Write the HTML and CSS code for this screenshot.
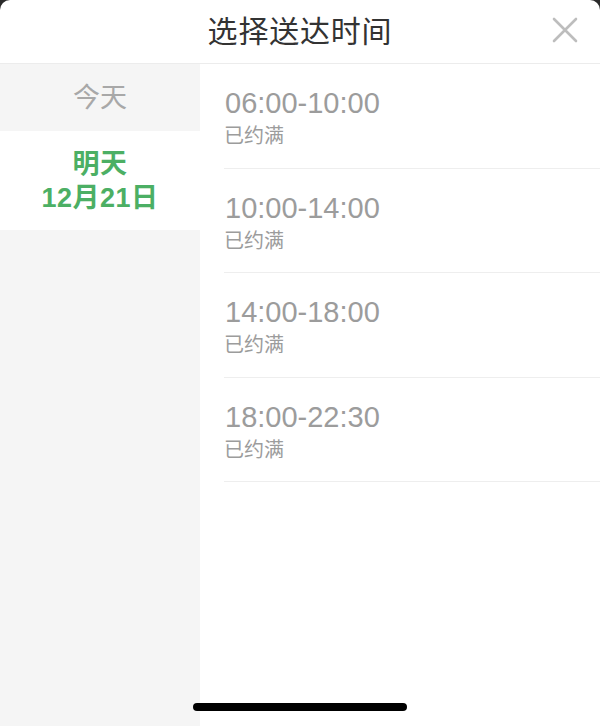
FILE: index.html
```html
<!DOCTYPE html>
<html lang="zh-CN">
<head>
<meta charset="utf-8">
<title>选择送达时间</title>
<link rel="stylesheet" href="styles.css">
</head>
<body>
<div class="sheet">
  <header class="header">
    <h1 class="title">选择送达时间</h1>
    <button class="close" aria-label="关闭">
      <svg width="26" height="26" viewBox="0 0 26 26"><path d="M2 2L24 24M24 2L2 24" stroke="#bdbdbd" stroke-width="2.6" stroke-linecap="round"/></svg>
    </button>
  </header>
  <div class="body">
    <nav class="days">
      <div class="day">今天</div>
      <div class="day day-active">明天<br>12月21日</div>
    </nav>
    <ul class="slots">
      <li class="slot"><div class="time">06:00-10:00</div><div class="status">已约满</div></li>
      <li class="slot"><div class="time">10:00-14:00</div><div class="status">已约满</div></li>
      <li class="slot"><div class="time">14:00-18:00</div><div class="status">已约满</div></li>
      <li class="slot"><div class="time">18:00-22:30</div><div class="status">已约满</div></li>
    </ul>
  </div>
  <div class="home-indicator"></div>
</div>
</body>
</html>
```
FILE: styles.css
```css
* { box-sizing: border-box; }
html, body { margin: 0; padding: 0; height: 100%; }
body {
  background: #2a2a2a;
  font-family: "Liberation Sans", "Noto Sans CJK SC", sans-serif;
}
.sheet {
  position: relative;
  height: 726px;
  background: #fff;
  border-radius: 10px 10px 0 0;
  overflow: hidden;
  display: flex;
  flex-direction: column;
}
.header {
  height: 64px;
  flex: none;
  display: flex;
  align-items: center;
  justify-content: center;
  border-bottom: 1px solid #ececec;
  position: relative;
}
.title {
  margin: 0;
  font-family: "Noto Sans CJK SC", sans-serif;
  font-weight: 400;
  font-size: 30px;
  color: #333;
  letter-spacing: 0.8px;
  line-height: 1;
  margin-top: -6px;
}
.close {
  position: absolute;
  right: 22px;
  top: 17px;
  width: 26px;
  height: 26px;
  padding: 0;
  border: 0;
  background: none;
}
.close svg { display: block; }
.body {
  flex: 1;
  display: flex;
}
.days {
  width: 200px;
  flex: none;
  background: #f5f5f5;
}
.day {
  height: 67px;
  padding-bottom: 4px;
  display: flex;
  align-items: center;
  justify-content: center;
  font-family: "Noto Sans CJK SC", sans-serif;
  font-size: 27px;
  color: #a8a8a8;
}
.day-active {
  height: 99px;
  padding-bottom: 0;
  background: #fff;
  color: #4caf64;
  font-weight: 700;
  font-family: "Liberation Sans", "Noto Sans CJK SC", sans-serif;
  font-size: 27px;
  line-height: 34px;
  letter-spacing: 0.5px;
  text-align: center;
}
.slots {
  flex: 1;
  margin: 0;
  padding: 0 0 0 24px;
  list-style: none;
}
.slot {
  height: 104.5px;
  padding-top: 21px;
  border-bottom: 1px solid #eeeeee;
}
.time {
  font-size: 29px;
  line-height: 36px;
  color: #9c9c9c;
  padding-left: 1px;
}
.status {
  font-family: "Noto Sans CJK SC", sans-serif;
  font-size: 20px;
  line-height: 28px;
  color: #9c9c9c;
}
.home-indicator {
  position: absolute;
  left: 193px;
  bottom: 15px;
  width: 214px;
  height: 8px;
  border-radius: 4px;
  background: #000;
}
```
